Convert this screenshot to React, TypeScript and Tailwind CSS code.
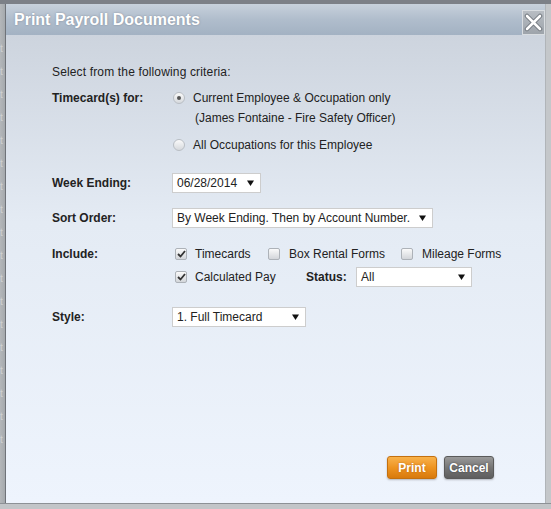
import React from "react";

function Arrow() {
  return (
    <svg width="7" height="6" viewBox="0 0 7 6" className="shrink-0">
      <path d="M0 0.5 L7 0.5 L3.5 6 Z" fill="#111" />
    </svg>
  );
}

function Select({ value, width }: { value: string; width: string }) {
  return (
    <div
      className={`${width} shrink-0 h-[20px] flex items-center justify-between bg-white border border-[#cdcdcd] pl-[4px] pr-[6px] text-[12px] text-[#222] whitespace-nowrap`}
    >
      <span>{value}</span>
      <Arrow />
    </div>
  );
}

function Radio({ checked }: { checked?: boolean }) {
  return (
    <span className="w-[12px] h-[12px] rounded-full border border-[#b9bec4] bg-gradient-to-b from-[#fafafa] to-[#d6d9dd] flex items-center justify-center shrink-0">
      {checked && <span className="w-[4px] h-[4px] rounded-full bg-[#555]" />}
    </span>
  );
}

function Checkbox({ checked }: { checked?: boolean }) {
  return (
    <span className="w-[12px] h-[12px] rounded-[2px] border border-[#adb2b8] bg-gradient-to-b from-[#fafafa] to-[#d3d6da] flex items-center justify-center shrink-0">
      {checked && (
        <svg width="9" height="8" viewBox="0 0 9 8">
          <path d="M1 4 L3.5 6.5 L8 1" stroke="#333" strokeWidth="1.8" fill="none" />
        </svg>
      )}
    </span>
  );
}

export default function App() {
  return (
    <div className="w-[551px] h-[509px] flex flex-col bg-[#9ea3a8] font-['Liberation_Sans',Arial,sans-serif] overflow-hidden">
      <div className="h-[4px] bg-[#7c8087] shrink-0" />
      <div className="flex flex-1 min-h-0">
        {/* page behind, left */}
        <div className="w-[6px] shrink-0 bg-gradient-to-r from-[#b4b7ba] to-[#a5a9ad] border-r border-[#6f7379] flex flex-col items-start pt-[40px] gap-[13px] text-[10px] leading-none text-[#cfd1d3] overflow-hidden">
          {Array.from({ length: 18 }).map((_, i) => (
            <span key={i}>t</span>
          ))}
        </div>

        {/* dialog */}
        <div className="flex-1 min-w-0 flex flex-col">
          <div className="h-[31px] shrink-0 flex items-center justify-between bg-gradient-to-b from-[#c7d1dc] via-[#b0bdcc] to-[#a3b2c3] pl-[8px] pr-0">
            <span className="text-white font-bold text-[16px] [text-shadow:0_0_2px_rgba(90,100,115,0.6)]">
              Print Payroll Documents
            </span>
            <div className="w-[23px] h-[25px] mt-[6px] bg-gradient-to-b from-[#b8bdc3] to-[#9ea4ab] border border-[#d9dde1] flex items-center justify-center">
              <svg width="19" height="19" viewBox="0 0 19 19">
                <path d="M3 3 L16 16 M16 3 L3 16" stroke="#6f757c" strokeWidth="4.5" strokeLinecap="round" />
                <path d="M3 3 L16 16 M16 3 L3 16" stroke="#ffffff" strokeWidth="2.6" strokeLinecap="round" />
              </svg>
            </div>
          </div>

          <div className="flex-1 flex flex-col bg-gradient-to-b from-[#cdd4de] via-[#e4ebf4] via-40% to-[#eef4fd] pl-[46px] pr-[51px] text-[12px] text-[#222] whitespace-nowrap">
            <div className="mt-[30px] h-[14px] leading-[14px] tracking-[0.15px]">Select from the following criteria:</div>

            {/* Timecard(s) for */}
            <div className="mt-[9px] flex">
              <div className="w-[120px] shrink-0 h-[20px] flex items-center font-bold">Timecard(s) for:</div>
              <div className="flex flex-col">
                <div className="h-[20px] flex items-center gap-[8px] pl-[1px]">
                  <Radio checked />
                  <span>Current Employee &amp; Occupation only</span>
                </div>
                <div className="h-[20px] flex items-center pl-[23px]">(James Fontaine - Fire Safety Officer)</div>
                <div className="mt-[7px] h-[20px] flex items-center gap-[8px] pl-[1px]">
                  <Radio />
                  <span>All Occupations for this Employee</span>
                </div>
              </div>
            </div>

            {/* Week Ending */}
            <div className="mt-[18px] flex items-center">
              <div className="w-[120px] shrink-0 font-bold">Week Ending:</div>
              <Select value="06/28/2014" width="w-[89px]" />
            </div>

            {/* Sort Order */}
            <div className="mt-[15px] flex items-center">
              <div className="w-[120px] shrink-0 font-bold">Sort Order:</div>
              <Select value="By Week Ending. Then by Account Number." width="w-[261px]" />
            </div>

            {/* Include */}
            <div className="mt-[16px] flex">
              <div className="w-[120px] shrink-0 h-[20px] flex items-center font-bold">Include:</div>
              <div className="flex flex-col pl-[3px]">
                <div className="h-[20px] flex items-center">
                  <div className="w-[93px] shrink-0 flex items-center gap-[8px]">
                    <Checkbox checked />
                    <span>Timecards</span>
                  </div>
                  <div className="w-[133px] shrink-0 flex items-center gap-[9px]">
                    <Checkbox />
                    <span>Box Rental Forms</span>
                  </div>
                  <div className="flex items-center gap-[9px]">
                    <Checkbox />
                    <span>Mileage Forms</span>
                  </div>
                </div>
                <div className="mt-[3px] h-[20px] flex items-center">
                  <div className="w-[131px] shrink-0 flex items-center gap-[8px]">
                    <Checkbox checked />
                    <span>Calculated Pay</span>
                  </div>
                  <div className="w-[50px] shrink-0 font-bold">Status:</div>
                  <Select value="All" width="w-[116px]" />
                </div>
              </div>
            </div>

            {/* Style */}
            <div className="mt-[20px] flex items-center">
              <div className="w-[120px] shrink-0 font-bold">Style:</div>
              <Select value="1. Full Timecard" width="w-[134px]" />
            </div>

            <div className="mt-auto mb-[24px] flex justify-end gap-[7px]">
              <button className="w-[50px] h-[23px] rounded-[3px] border border-[#c4700f] bg-gradient-to-b from-[#f8b24a] via-[#ee9420] to-[#d87a0c] text-white font-bold text-[12px] [text-shadow:0_0_2px_rgba(150,70,0,0.6)] shadow-[0_1px_2px_rgba(0,0,0,0.25)]">
                Print
              </button>
              <button className="w-[50px] h-[23px] rounded-[3px] border border-[#5a5a5a] bg-gradient-to-b from-[#9a9a9a] via-[#767676] to-[#5e5e5e] text-white font-bold text-[12px] [text-shadow:0_0_2px_rgba(0,0,0,0.5)] shadow-[0_1px_2px_rgba(0,0,0,0.25)]">
                Cancel
              </button>
            </div>
          </div>
        </div>

        {/* page behind, right */}
        <div className="w-[6px] shrink-0 bg-[#c4c7ca] border-l border-[#b0b4b8]" />
      </div>
      <div className="h-[6px] bg-[#c2c5c8] border-t border-[#8d9196] shrink-0" />
    </div>
  );
}
